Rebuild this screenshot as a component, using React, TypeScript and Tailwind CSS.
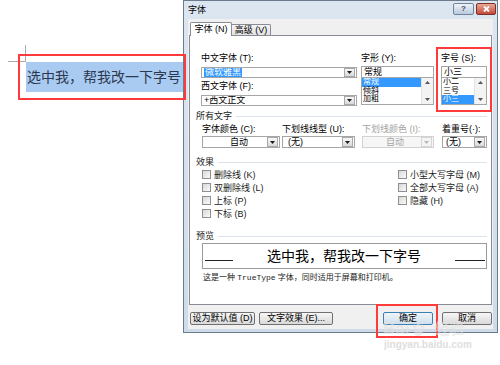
import React from "react";

function DownArrow({ disabled }: { disabled?: boolean }) {
  return (
    <div
      className={
        disabled
          ? "w-[11px] h-full border border-[#d6d6d6] bg-[#f4f4f4] flex items-center justify-center"
          : "w-[11px] h-full border border-[#a9a9a9] bg-gradient-to-b from-[#f8f8f8] to-[#d9d9d9] flex items-center justify-center"
      }
    >
      <svg width="5" height="3" viewBox="0 0 5 3">
        <path d="M0 0H5L2.5 3Z" fill={disabled ? "#b8b8b8" : "#1a1a1a"} />
      </svg>
    </div>
  );
}

function Combo({
  className,
  disabled,
  children,
}: {
  className: string;
  disabled?: boolean;
  children: React.ReactNode;
}) {
  return (
    <div
      className={`${className} flex items-stretch border pr-[1px] ${
        disabled ? "border-[#d2d2d2] bg-[#f6f6f6] text-[#a5a5a5]" : "border-[#a6a6a6] bg-white text-black"
      }`}
    >
      <div className="flex-1 flex items-center text-[9px] leading-[9px] overflow-hidden whitespace-nowrap">{children}</div>
      <DownArrow disabled={disabled} />
    </div>
  );
}

function ScrollBar() {
  return (
    <div className="w-[12px] h-full bg-[#f3f3f3] border-l border-[#e2e2e2] flex flex-col items-center justify-between py-[3px]">
      <svg width="5" height="3" viewBox="0 0 5 3">
        <path d="M0 3H5L2.5 0Z" fill="#555" />
      </svg>
      <svg width="5" height="3" viewBox="0 0 5 3">
        <path d="M0 0H5L2.5 3Z" fill="#555" />
      </svg>
    </div>
  );
}

function ListBox({ items, sel }: { items: string[]; sel: number }) {
  return (
    <div className="h-[27px] border border-t-0 border-[#a6a6a6] bg-white flex">
      <div className="flex-1 flex flex-col overflow-hidden">
        {items.map((it, i) => (
          <div
            key={it}
            className={
              i === sel
                ? "h-[8.6px] leading-[8.6px] text-[8px] bg-[#3399ff] text-white pl-[1px]"
                : "h-[8.6px] leading-[8.6px] text-[8px] text-black pl-[1px]"
            }
          >
            {it}
          </div>
        ))}
      </div>
      <ScrollBar />
    </div>
  );
}

function GroupHeader({ title, className }: { title: string; className: string }) {
  return (
    <div className={`${className} flex items-center h-[10px] ml-[6px] mr-[4px]`}>
      <span className="text-[9px] leading-[10px] whitespace-nowrap text-[#1a1a1a]">{title}</span>
      <div className="flex-1 ml-[4px] h-px bg-[#dde3ea]" />
    </div>
  );
}

function Check({ label }: { label: string }) {
  return (
    <div className="h-[13px] flex items-center">
      <div className="w-[9px] h-[9px] border border-[#8e8f8f] bg-gradient-to-br from-[#d8d8d8] to-[#fafafa]" />
      <span className="ml-[3px] text-[9px] leading-[10px] text-[#1a1a1a] whitespace-nowrap">{label}</span>
    </div>
  );
}

function Label({ children, className = "" }: { children: React.ReactNode; className?: string }) {
  return <div className={`h-[10px] text-[9px] leading-[10px] whitespace-nowrap ${className}`}>{children}</div>;
}

export default function App() {
  return (
    <div className="w-[500px] h-[365px] bg-white relative overflow-hidden flex font-['Liberation_Sans','Noto_Sans_CJK_SC',sans-serif] text-black">
      {/* document area */}
      <div className="w-[183px] shrink-0 pl-[8px] pt-[45px]">
        <div className="w-[18px] h-[17px] border-r border-b border-[#ababab]" />
        <div className="ml-[18px] w-[157px] h-[30px] bg-[#aacbf1] text-[14px] leading-[30px] text-[#2b3850] whitespace-nowrap pl-[1px]">
          选中我，帮我改一下字号
        </div>
      </div>

      {/* dialog */}
      <div className="w-[315px] h-[333px] shrink-0 border border-[#6a7b8d] bg-gradient-to-b from-[#dce6f1] to-[#cfdbe8] flex flex-col px-[4px]">
        {/* title bar */}
        <div className="h-[18px] flex items-start justify-between">
          <div className="text-[9px] leading-[16px] pt-[1px]">字体</div>
          <div className="flex gap-[2px] pt-[2px] -mr-[3px]">
            <div className="w-[21px] h-[12px] rounded-[2px] border border-[#71849a] bg-gradient-to-b from-[#eef3f9] to-[#b9cadd] flex items-center justify-center text-[8px] leading-[8px] font-bold text-[#3a4b5e]">
              ?
            </div>
            <div className="w-[20px] h-[12px] rounded-[2px] border border-[#7e2f27] bg-gradient-to-b from-[#e9a898] to-[#c2473a] flex items-center justify-center">
              <svg width="7" height="6" viewBox="0 0 7 6">
                <path d="M1 0.5L6 5.5M6 0.5L1 5.5" stroke="#fff" strokeWidth="1.8" />
              </svg>
            </div>
          </div>
        </div>

        {/* body */}
        <div className="h-[310px] bg-[#f0f0f0] flex flex-col">
          {/* tabs */}
          <div className="h-[16px] flex items-end pl-[2px]">
            <div className="relative z-10 w-[42px] h-[14px] -mb-px bg-white border border-b-0 border-[#898c95] rounded-t-[2px] text-[9px] leading-[13px] text-center">
              字体 (N)
            </div>
            <div className="w-[39px] h-[11px] bg-gradient-to-b from-[#f4f4f4] to-[#e2e2e2] border border-l-0 border-b-0 border-[#898c95] rounded-tr-[2px] text-[9px] leading-[11px] text-center">
              高级 (V)
            </div>
          </div>

          {/* panel */}
          <div className="mx-[1px] h-[270px] border border-[#898c95] bg-white flex flex-col">
            {/* section 1 */}
            <div className="flex pt-[17px] pl-[11px]">
              <div className="w-[156px] flex flex-col">
                <Label>中文字体 (T):</Label>
                <Combo className="mt-[4px] h-[11px] w-full">
                  <span className="ml-[2px] bg-[#3399ff] text-white px-[1px] leading-[9px]">微软雅黑</span>
                </Combo>
                <Label className="mt-[3px]">西文字体 (F):</Label>
                <Combo className="mt-[4px] h-[11px] w-full">
                  <span className="ml-[2px]">+西文正文</span>
                </Combo>
              </div>
              <div className="w-[73px] ml-[4px] flex flex-col">
                <Label>字形 (Y):</Label>
                <div className="mt-[3px] h-[12px] border border-[#a6a6a6] bg-white text-[9px] leading-[10px] pl-[2px]">常规</div>
                <ListBox items={["常规", "倾斜", "加粗"]} sel={0} />
              </div>
              <div className="w-[46px] ml-[7px] flex flex-col">
                <Label>字号 (S):</Label>
                <div className="mt-[3px] h-[12px] border border-[#a6a6a6] bg-white text-[9px] leading-[10px] pl-[2px]">小三</div>
                <ListBox items={["小二", "三号", "小三"]} sel={2} />
              </div>
            </div>

            {/* section 2 */}
            <GroupHeader title="所有文字" className="mt-[5px]" />
            <div className="flex mt-[3px] pl-[12px]">
              <div className="w-[78px] flex flex-col">
                <Label>字体颜色 (C):</Label>
                <Combo className="mt-[2px] h-[12px] w-full">
                  <span className="w-full text-center pl-[8px]">自动</span>
                </Combo>
              </div>
              <div className="w-[73px] ml-[2px] flex flex-col">
                <Label>下划线线型 (U):</Label>
                <Combo className="mt-[2px] h-[12px] w-full">
                  <span className="pl-[5px]">(无)</span>
                </Combo>
              </div>
              <div className="w-[72px] ml-[7px] flex flex-col">
                <Label className="text-[#a3a3a3]">下划线颜色 (I):</Label>
                <Combo className="mt-[2px] h-[12px] w-full" disabled>
                  <span className="w-full text-center pl-[6px]">自动</span>
                </Combo>
              </div>
              <div className="w-[45px] ml-[8px] flex flex-col">
                <Label>着重号(·):</Label>
                <Combo className="mt-[2px] h-[12px] w-full">
                  <span className="pl-[3px]">(无)</span>
                </Combo>
              </div>
            </div>

            {/* section 3 */}
            <GroupHeader title="效果" className="mt-[9px]" />
            <div className="flex mt-[1px] pl-[12px]">
              <div className="w-[196px] flex flex-col">
                <Check label="删除线 (K)" />
                <Check label="双删除线 (L)" />
                <Check label="上标 (P)" />
                <Check label="下标 (B)" />
              </div>
              <div className="flex flex-col">
                <Check label="小型大写字母 (M)" />
                <Check label="全部大写字母 (A)" />
                <Check label="隐藏 (H)" />
              </div>
            </div>

            {/* section 4 */}
            <GroupHeader title="预览" className="mt-[11px]" />
            <div className="mt-[2px] ml-[12px] w-[285px] h-[26px] border border-[#9a9a9a] bg-white flex items-start">
              <div className="ml-[2px] mt-[16px] w-[28px] h-px bg-[#222]" />
              <div className="flex-1 text-center text-[14px] leading-[24px] text-black whitespace-nowrap">
                选中我，帮我改一下字号
              </div>
              <div className="mr-[1px] mt-[16px] w-[30px] h-px bg-[#222]" />
            </div>
            <div className="mt-[4px] ml-[13px] h-[10px] text-[8px] leading-[10px] whitespace-nowrap text-[#1a1a1a]">
              这是一种 <span className="font-['Liberation_Mono',monospace]">TrueType</span> 字体，同时适用于屏幕和打印机。
            </div>
          </div>

          {/* buttons */}
          <div className="mt-[7px] h-[13px] flex pl-[2px] pr-[1px]">
            <div className="w-[65px] h-[13px] rounded-[2px] border border-[#707070] bg-gradient-to-b from-[#f6f6f6] to-[#dadada] text-[9px] leading-[11px] text-center whitespace-nowrap">
              设为默认值 (D)
            </div>
            <div className="ml-[4px] w-[74px] h-[13px] rounded-[2px] border border-[#707070] bg-gradient-to-b from-[#f6f6f6] to-[#dadada] text-[9px] leading-[11px] text-center whitespace-nowrap">
              文字效果 (E)...
            </div>
            <div className="ml-auto w-[50px] h-[13px] rounded-[2px] border border-[#3c7fb1] bg-gradient-to-b from-[#eef5fb] to-[#cfe0ee] text-[9px] leading-[11px] text-center">
              确定
            </div>
            <div className="ml-[9px] w-[50px] h-[13px] rounded-[2px] border border-[#707070] bg-gradient-to-b from-[#f6f6f6] to-[#dadada] text-[9px] leading-[11px] text-center">
              取消
            </div>
          </div>
        </div>
      </div>

      {/* annotation red boxes */}
      <div className="absolute left-[18px] top-[54px] w-[168px] h-[46px] border-2 border-[#ff3a3a]" />
      <div className="absolute left-[436px] top-[47px] w-[56px] h-[65px] border-2 border-[#ff3a3a]" />
      <div className="absolute left-[376px] top-[304px] w-[62px] h-[34px] border-2 border-[#ff3a3a]" />

      {/* watermark */}
      <div className="absolute left-[383px] top-[320px] flex items-center text-[#e2e2e2] opacity-60">
        <span className="text-[17px] leading-[18px] font-bold font-['Liberation_Sans',sans-serif]">Bai</span>
        <svg width="15" height="15" viewBox="0 0 16 16" className="mx-[2px]">
          <g fill="#e2e2e2">
            <ellipse cx="4" cy="5" rx="1.8" ry="2.3" />
            <ellipse cx="8" cy="3" rx="1.8" ry="2.3" />
            <ellipse cx="12" cy="5" rx="1.8" ry="2.3" />
            <ellipse cx="8" cy="11" rx="4.5" ry="4" />
          </g>
        </svg>
        <span className="ml-[6px] text-[15px] leading-[18px] font-bold">经验</span>
      </div>
      <div className="absolute left-[384px] top-[339px] text-[10px] leading-[12px] text-[#dedede] font-bold font-['Liberation_Sans',sans-serif]">
        jingyan.baidu.com
      </div>
    </div>
  );
}
